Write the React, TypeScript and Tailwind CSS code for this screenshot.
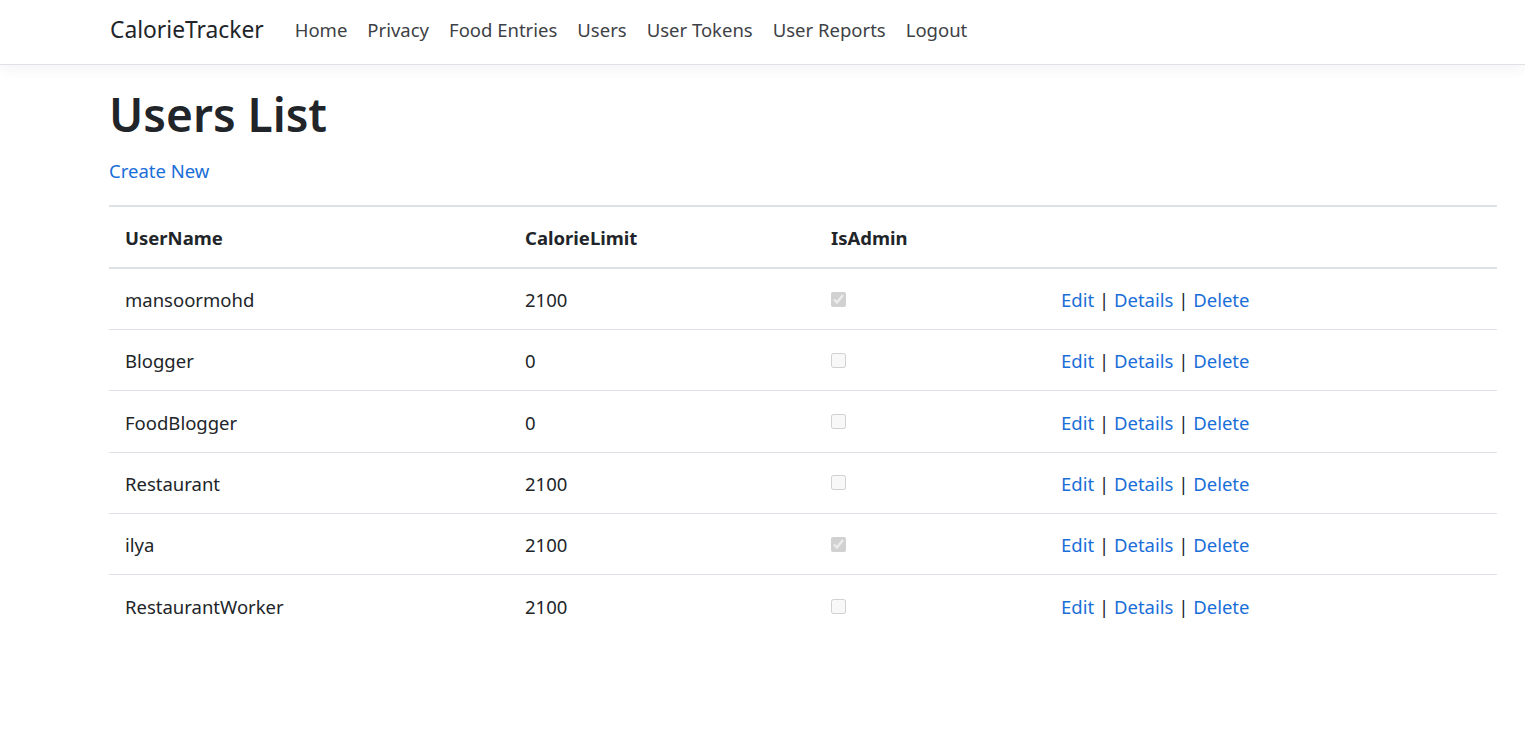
import React from 'react'

const users = [
  { name: 'mansoormohd', limit: 2100, admin: true },
  { name: 'Blogger', limit: 0, admin: false },
  { name: 'FoodBlogger', limit: 0, admin: false },
  { name: 'Restaurant', limit: 2100, admin: false },
  { name: 'ilya', limit: 2100, admin: true },
  { name: 'RestaurantWorker', limit: 2100, admin: false },
]

const navLinks = ['Home', 'Privacy', 'Food Entries', 'Users', 'User Tokens', 'User Reports', 'Logout']

export default function App() {
  return (
    <div className="min-h-[749px] bg-white text-[#212529] font-['Noto_Sans',sans-serif]">
      <header className="h-[65px] border-b border-[#dee2e6] bg-white shadow-[0_4px_14px_rgba(0,0,0,0.05)]">
        <nav className="flex items-center h-full pl-[110px] pb-[4px]">
          <span className="text-[22.8px] text-[#212529] mr-[21px]">CalorieTracker</span>
          <ul className="flex items-center">
            {navLinks.map((link) => (
              <li key={link} className="px-[10px] text-[18.5px] text-[#3d4145]">{link}</li>
            ))}
          </ul>
        </nav>
      </header>

      <main className="pl-[109px] pr-[28px]">
        <h1 className="text-[46px] font-semibold leading-[1.2] pt-[22px] pb-[15px]">Users List</h1>
        <a className="text-[18.5px] text-[#1a6ed8] block leading-[1.5]">Create New</a>

        <table className="w-full mt-[20px] border-collapse text-[18.5px]">
          <thead>
            <tr className="border-t-2 border-b-2 border-[#dee2e6]">
              <th className="w-[400px] text-left font-bold px-[16px] h-[62px] pt-[2px]">UserName</th>
              <th className="w-[306px] text-left font-bold px-[16px] pt-[2px]">CalorieLimit</th>
              <th className="w-[230px] text-left font-bold px-[16px] pt-[2px]">IsAdmin</th>
              <th></th>
            </tr>
          </thead>
          <tbody>
            {users.map((u, i) => (
              <tr key={u.name} className={i < users.length - 1 ? 'border-b border-[#dee2e6]' : ''}>
                <td className="px-[16px] h-[61.4px] pt-[2px]">{u.name}</td>
                <td className="px-[16px] pt-[2px]">{u.limit}</td>
                <td className="px-[16px]">
                  <input
                    type="checkbox"
                    disabled
                    checked={u.admin}
                    readOnly
                    className="w-[15px] h-[15px] m-0 align-middle relative -top-[2px]"
                  />
                </td>
                <td className="px-[16px] pt-[2px]">
                  <a className="text-[#1a6ed8]">Edit</a> | <a className="text-[#1a6ed8]">Details</a> |{' '}
                  <a className="text-[#1a6ed8]">Delete</a>
                </td>
              </tr>
            ))}
          </tbody>
        </table>
      </main>
    </div>
  )
}
